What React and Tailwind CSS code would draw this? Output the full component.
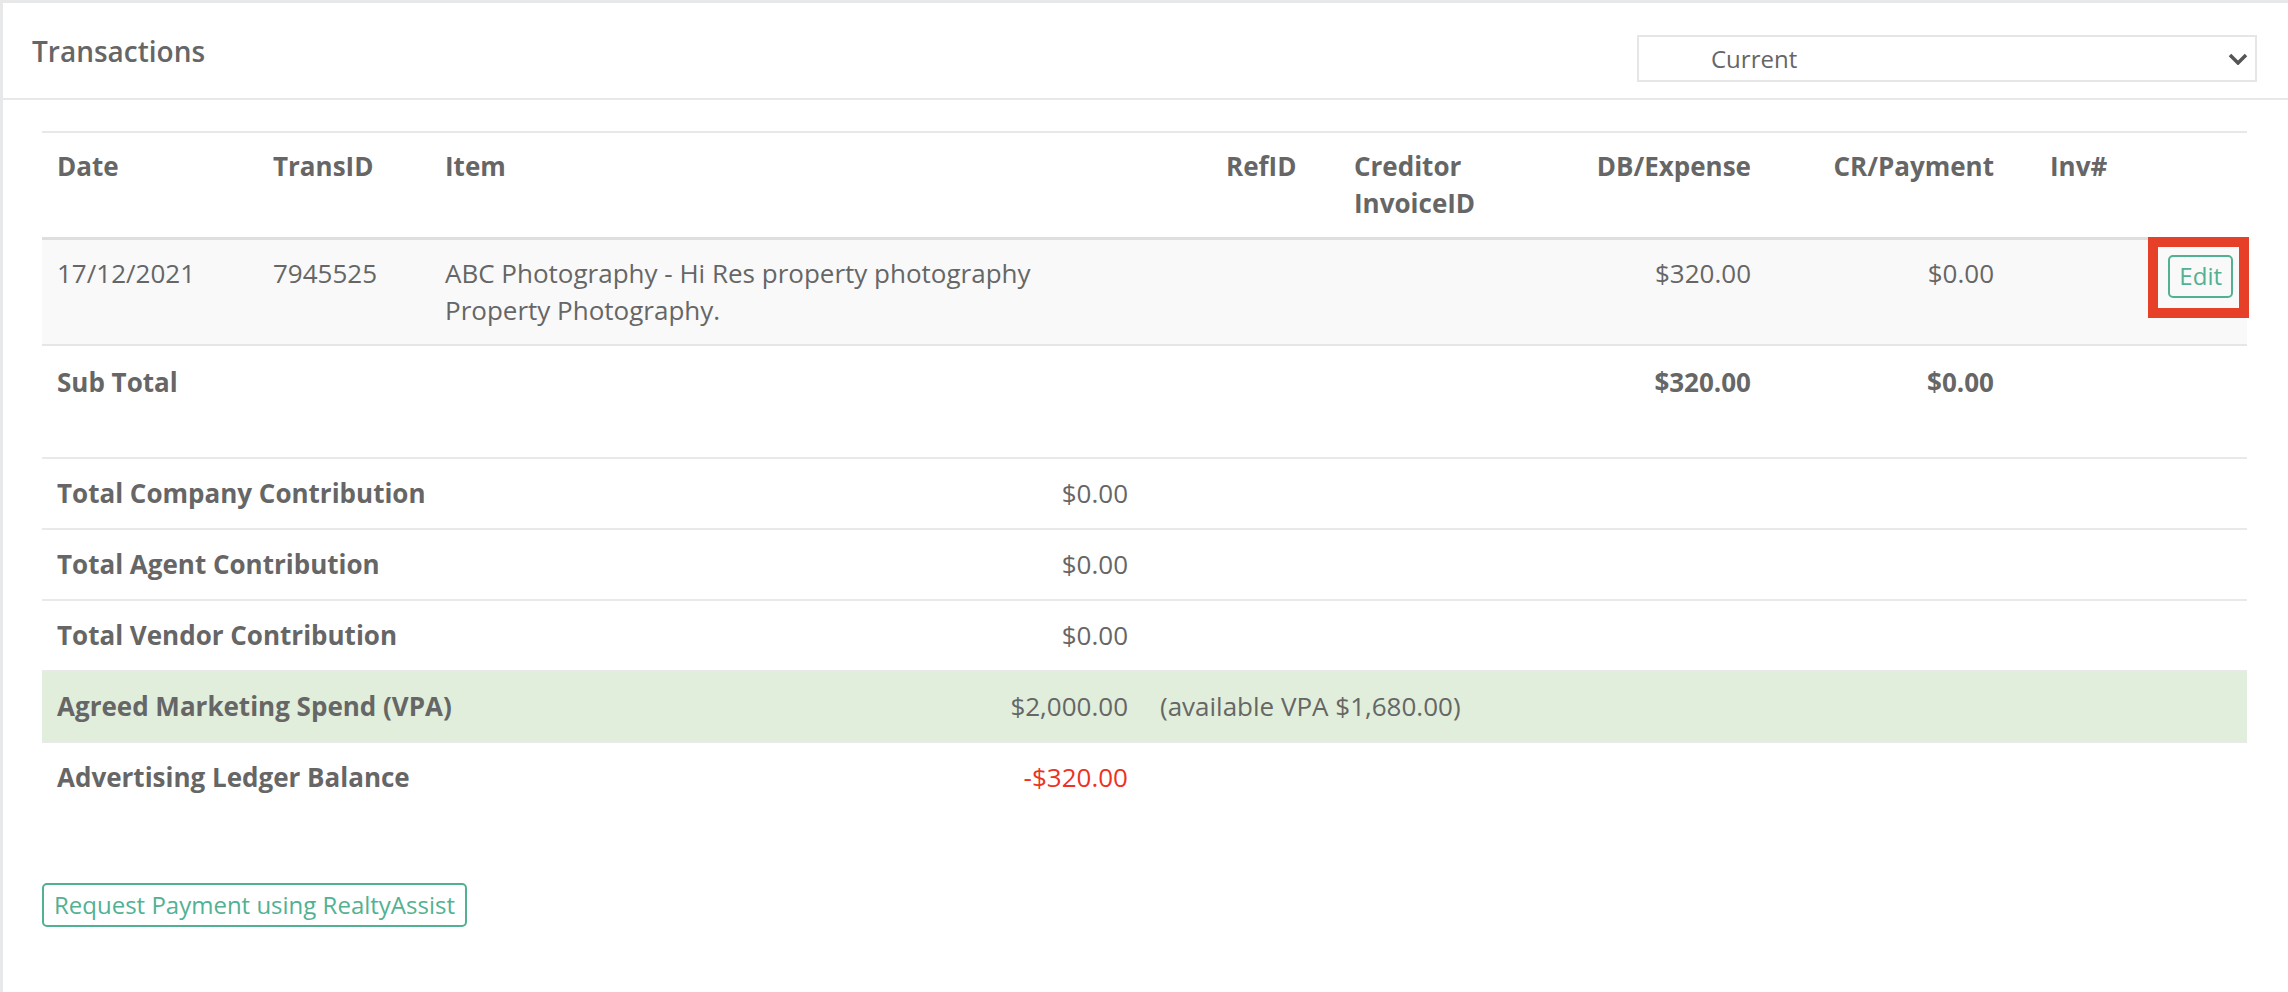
export default function App() {
  const cell = "px-[15px] py-[15px] align-top";
  const tCell = "px-[15px] pt-[18px] pb-[13px] align-top";
  const sCell = "px-[15px] py-[16px] align-top";
  return (
    <div className="relative w-[2288px] h-[992px] bg-white border-t-[3px] border-l-[3px] border-[#e7e8ea] text-[#666] font-['Open_Sans',sans-serif] text-[26px] leading-[37px] overflow-hidden">
      {/* header */}
      <div className="flex items-start justify-between h-[97px] border-b-2 border-[#e8e8e8] pl-[29px] pr-[31px]">
        <div className="pt-[28px] text-[28px] leading-[40px] font-semibold text-[#666]">Transactions</div>
        <div className="mt-[32px] w-[620px] h-[47px] border-2 border-[#e6e6e6] flex items-center justify-between pl-[72px] pr-[7px] text-[24px] text-[#666]">
          <span>Current</span>
          <svg width="20" height="12" viewBox="0 0 20 12" fill="none">
            <path d="M2 2 L10 10 L18 2" stroke="#555" strokeWidth="3.5" />
          </svg>
        </div>
      </div>

      {/* transactions table */}
      <table className="ml-[39px] mt-[31px] w-[2205px] table-fixed border-collapse">
        <colgroup>
          <col className="w-[216px]" />
          <col className="w-[172px]" />
          <col className="w-[781px]" />
          <col className="w-[128px]" />
          <col className="w-[181px]" />
          <col className="w-[246px]" />
          <col className="w-[269px]" />
          <col className="w-[115px]" />
          <col className="w-[97px]" />
        </colgroup>
        <thead>
          <tr className="border-t-2 border-b-[3px] border-t-[#e8e8e8] border-b-[#dedede] font-bold">
            <th className={cell + " text-left font-bold"}>Date</th>
            <th className={cell + " text-left font-bold"}>TransID</th>
            <th className={cell + " text-left font-bold"}>Item</th>
            <th className={cell + " text-left font-bold"}>RefID</th>
            <th className={cell + " text-left font-bold"}>Creditor InvoiceID</th>
            <th className={cell + " text-right font-bold"}>DB/Expense</th>
            <th className={cell + " text-right font-bold pr-[41px]"}>CR/Payment</th>
            <th className={cell + " text-left font-bold"}>Inv#</th>
            <th className={cell}></th>
          </tr>
        </thead>
        <tbody>
          <tr className="bg-[#f9f9f9] border-b-2 border-[#e6e6e6]">
            <td className={cell}>17/12/2021</td>
            <td className={cell}>7945525</td>
            <td className={cell}>
              ABC Photography - Hi Res property photography
              <br />
              Property Photography.
            </td>
            <td className={cell}></td>
            <td className={cell}></td>
            <td className={cell + " text-right"}>$320.00</td>
            <td className={cell + " text-right pr-[41px]"}>$0.00</td>
            <td className={cell}></td>
            <td className={cell + " text-right pr-[14px]"}>
              <span className="inline-block h-[43px] px-[9px] border-2 border-[#52b192] rounded-[5px] text-[24px] leading-[38px] text-[#52b192]">
                Edit
              </span>
            </td>
          </tr>
          <tr>
            <td className={tCell + " font-bold"}>Sub Total</td>
            <td className={tCell}></td>
            <td className={tCell}></td>
            <td className={tCell}></td>
            <td className={tCell}></td>
            <td className={tCell + " text-right font-bold"}>$320.00</td>
            <td className={tCell + " text-right font-bold pr-[41px]"}>$0.00</td>
            <td className={tCell}></td>
            <td className={tCell}></td>
          </tr>
        </tbody>
      </table>

      {/* summary table */}
      <table className="ml-[39px] mt-[43px] w-[2205px] table-fixed border-collapse">
        <colgroup>
          <col className="w-[758px]" />
          <col className="w-[343px]" />
          <col className="w-[1104px]" />
        </colgroup>
        <tbody>
          <tr className="border-t-2 border-[#e9e9e9]">
            <td className={sCell + " font-bold"}>Total Company Contribution</td>
            <td className={sCell + " text-right"}>$0.00</td>
            <td className={sCell}></td>
          </tr>
          <tr className="border-t-2 border-[#e9e9e9]">
            <td className={sCell + " font-bold"}>Total Agent Contribution</td>
            <td className={sCell + " text-right"}>$0.00</td>
            <td className={sCell}></td>
          </tr>
          <tr className="border-t-2 border-[#e9e9e9]">
            <td className={sCell + " font-bold"}>Total Vendor Contribution</td>
            <td className={sCell + " text-right"}>$0.00</td>
            <td className={sCell}></td>
          </tr>
          <tr className="border-t-2 border-[#e9e9e9] bg-[#e1eedb]">
            <td className={sCell + " font-bold"}>Agreed Marketing Spend (VPA)</td>
            <td className={sCell + " text-right"}>$2,000.00</td>
            <td className={sCell + " pl-[17px]"}>(available VPA $1,680.00)</td>
          </tr>
          <tr className="border-t-2 border-[#e9e9e9]">
            <td className={sCell + " font-bold"}>Advertising Ledger Balance</td>
            <td className={sCell + " text-right text-[#ec3324]"}>-$320.00</td>
            <td className={sCell}></td>
          </tr>
        </tbody>
      </table>

      <div className="ml-[39px] mt-[71px]">
        <span className="inline-block h-[44px] px-[10px] border-2 border-[#52b192] rounded-[5px] text-[24px] leading-[39px] text-[#52b192]">
          Request Payment using RealtyAssist
        </span>
      </div>

      {/* red annotation box */}
      <div className="absolute left-[2145px] top-[234px] w-[101px] h-[81px] border-[10px] border-[#e64028]"></div>
    </div>
  );
}
